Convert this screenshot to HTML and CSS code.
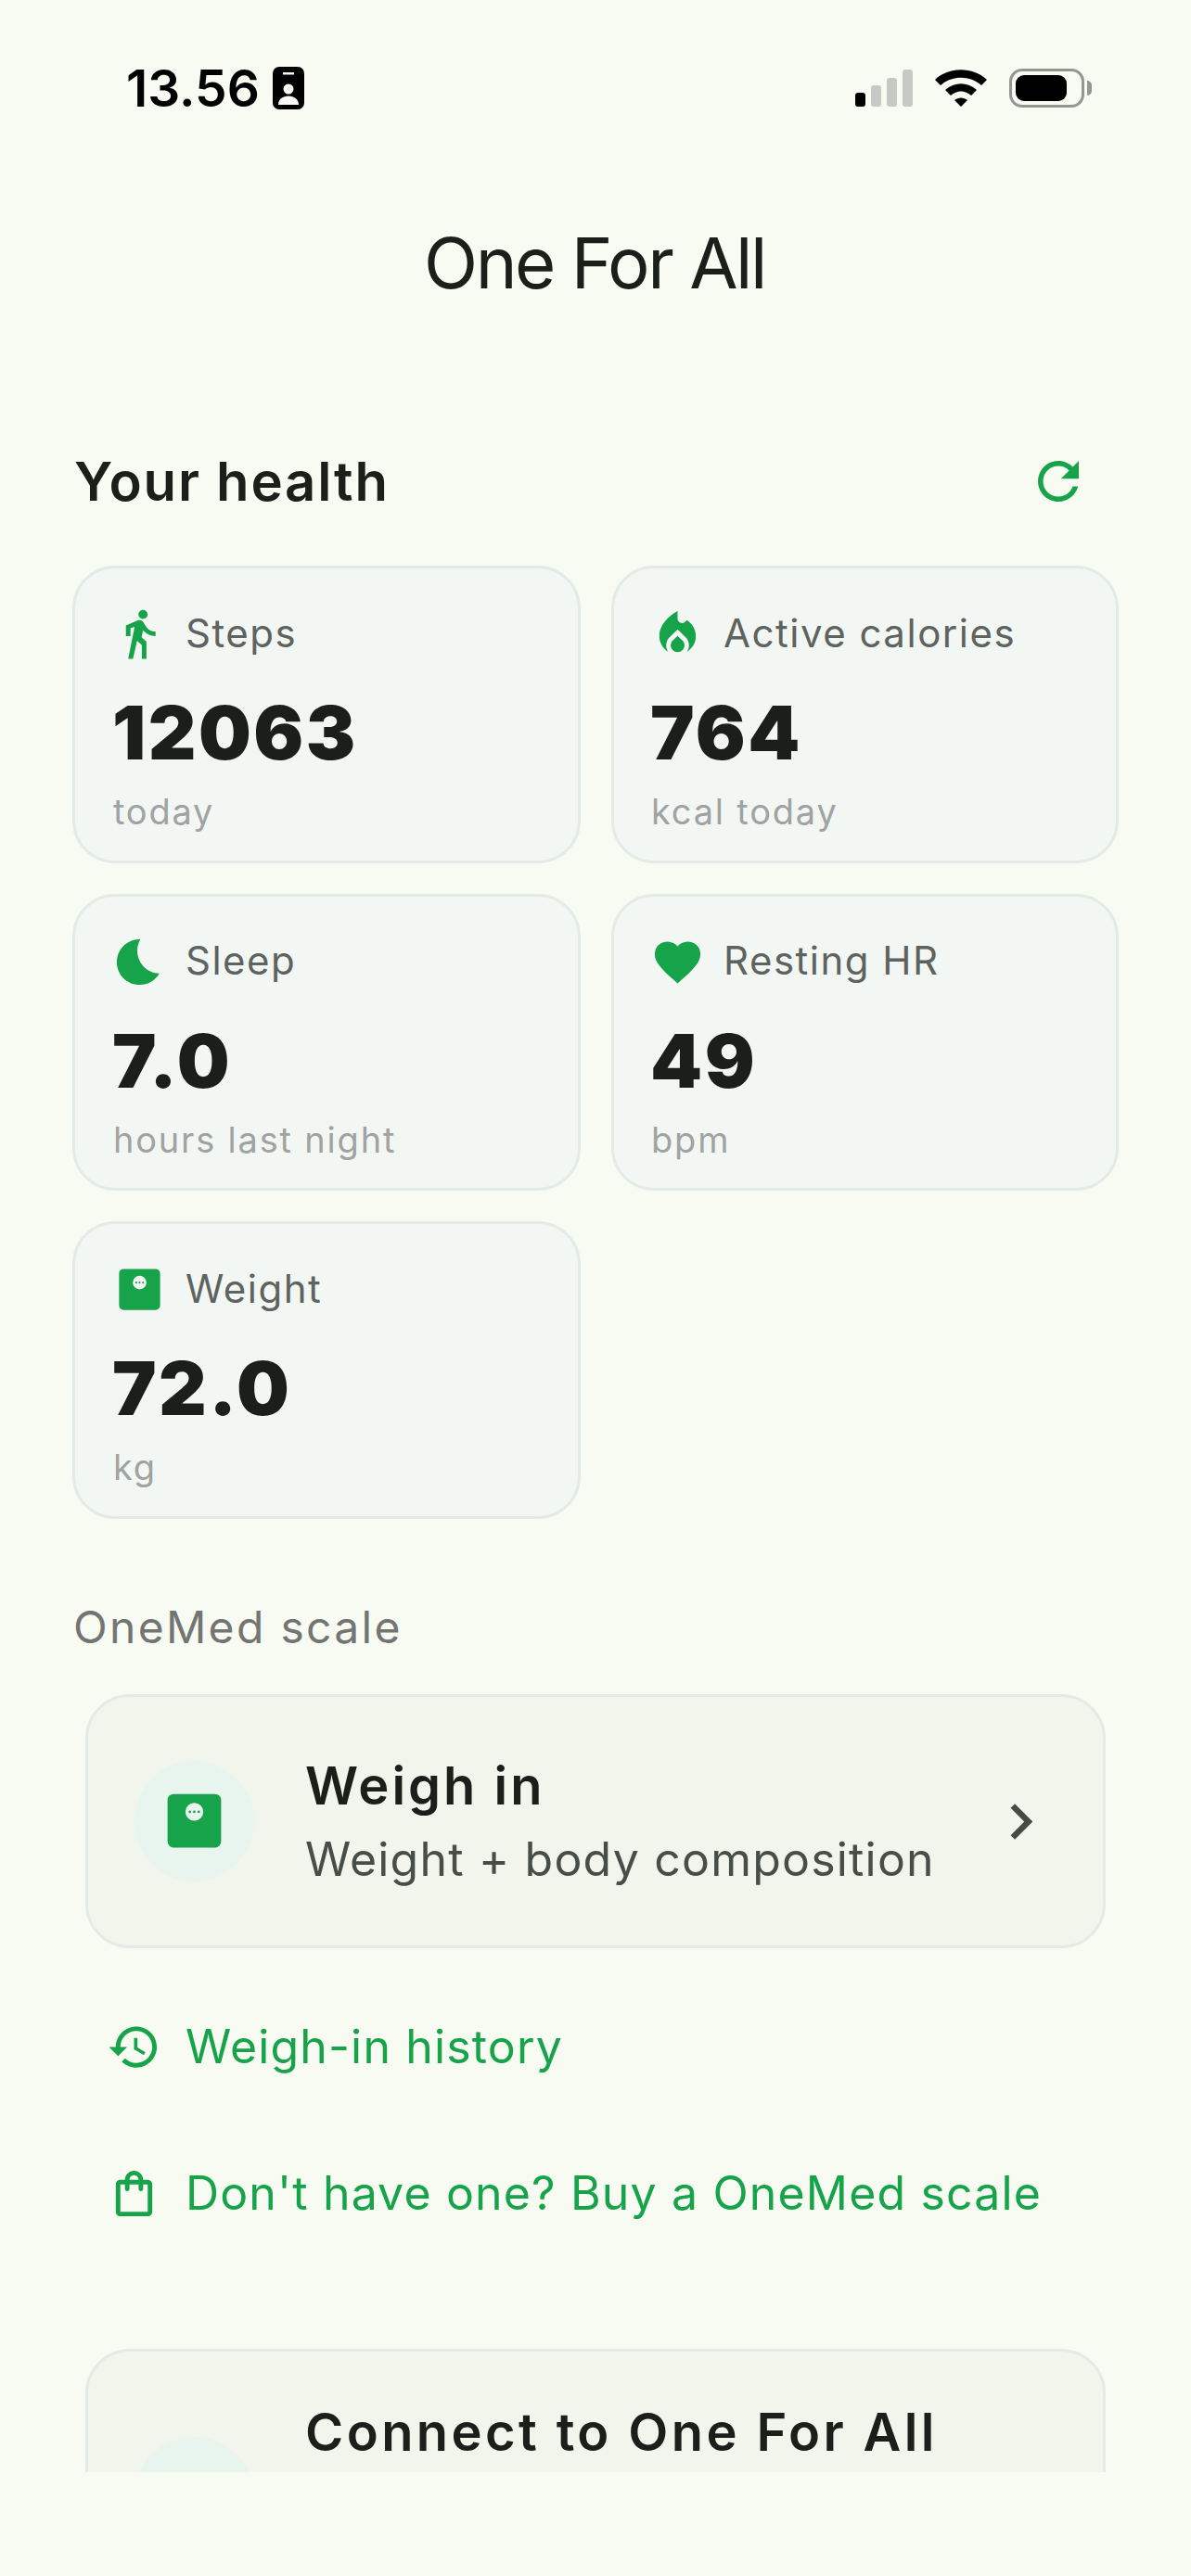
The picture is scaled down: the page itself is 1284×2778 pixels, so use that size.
FILE: index.html
```html
<!DOCTYPE html>
<html lang="en">

<head>
    <meta charset="UTF-8">
    <meta name="viewport" content="width=device-width, initial-scale=1.0">
    <title>One For All</title>
    <link rel="stylesheet" href="styles.css">
</head>

<body>
    <div class="screen">
        <div class="status-bar">
            <div class="status-left">
                <span class="time">13.56</span>
                <svg class="badge" width="34" height="46" viewBox="0 0 34 46">
                    <path fill="#000" fill-rule="evenodd" d="M7 0H27A7 7 0 0 1 34 7V39A7 7 0 0 1 27 46H7A7 7 0 0 1 0 39V7A7 7 0 0 1 7 0ZM11 6V8.500H23V6ZM17 18.500A5.500 5.500 0 1 0 17 29.500A5.500 5.500 0 1 0 17 18.500ZM6 41C6 35 11 31.500 17 31.500C23 31.500 28 35 28 41Z" />
                </svg>
            </div>
            <div class="status-right">
                <div class="signal">
                    <span class="bar bar-1 on"></span>
                    <span class="bar bar-2"></span>
                    <span class="bar bar-3"></span>
                    <span class="bar bar-4"></span>
                </div>
                <svg class="wifi" width="56" height="40" viewBox="0 0 56 40">
                    <path d="M0 11C15 -3.500 41 -3.500 56 11L50 17C38 6 18 6 6 17Z" />
                    <path d="M11 22C21 13 35 13 45 22L39 28C32 22 24 22 17 28Z" />
                    <path d="M21 33C25 29.500 31 29.500 35 33L28 40Z" />
                </svg>
                <div class="battery">
                    <div class="battery-body"><div class="battery-fill"></div></div>
                    <div class="battery-tip"></div>
                </div>
            </div>
        </div>

        <h1 class="app-title">One For All</h1>

        <div class="content">
            <div class="section-head">
                <h2>Your health</h2>
                <svg class="refresh" viewBox="0 0 24 24">
                    <path d="M17.650 6.350C16.200 4.900 14.210 4 12 4c-4.420 0-7.990 3.580-7.990 8s3.570 8 7.990 8c3.730 0 6.840-2.550 7.730-6h-2.080c-.82 2.330-3.040 4-5.650 4-3.310 0-6-2.690-6-6s2.690-6 6-6c1.660 0 3.140.69 4.220 1.780L13 11h7V4l-2.350 2.350z" />
                </svg>
            </div>

            <div class="stats">
                <div class="stat-card">
                    <div class="stat-head">
                        <svg class="stat-icon" viewBox="0 0 24 24"><path d="M13.500 5.500c1.100 0 2-.9 2-2s-.9-2-2-2-2 .9-2 2 .9 2 2 2zM9.800 8.900L7 23h2.100l1.800-8 2.100 2v6h2v-7.500l-2.100-2 .6-3C14.800 12 16.800 13 19 13v-2c-1.900 0-3.500-1-4.300-2.400l-1-1.600c-.4-.6-1-1-1.700-1-.3 0-.5.1-.8.1L6 8.300V13h2V9.600l1.800-.7" /></svg>
                        <span class="stat-label">Steps</span>
                    </div>
                    <div class="stat-value">12063</div>
                    <div class="stat-unit">today</div>
                </div>
                <div class="stat-card">
                    <div class="stat-head">
                        <svg class="stat-icon" viewBox="0 0 24 24"><path d="M12 12.900l-2.130 2.090C9.310 15.550 9 16.280 9 17.060 9 18.680 10.350 20 12 20s3-1.320 3-2.940c0-.78-.31-1.520-.87-2.070L12 12.900z" /><path d="M16 6l-.44.55C14.380 8.020 12 7.190 12 5.300V2S4 6 4 13c0 2.920 1.560 5.470 3.890 6.860C7.330 19.070 7 18.100 7 17.060c0-1.320.52-2.560 1.470-3.500L12 10.100l3.530 3.470c.95.93 1.470 2.170 1.470 3.500 0 1.020-.31 1.960-.85 2.750 1.890-1.150 3.290-3.060 3.710-5.300C20.520 10.970 18.790 7.620 16 6z" /></svg>
                        <span class="stat-label">Active calories</span>
                    </div>
                    <div class="stat-value">764</div>
                    <div class="stat-unit">kcal today</div>
                </div>
                <div class="stat-card">
                    <div class="stat-head">
                        <svg class="stat-icon" viewBox="0 0 24 24"><path d="M12.340 2.020C6.590 1.820 2 6.420 2 12c0 5.520 4.480 10 10 10 3.710 0 6.930-2.020 8.660-5.020-7.510-.25-12.090-8.430-8.320-14.960z" /></svg>
                        <span class="stat-label">Sleep</span>
                    </div>
                    <div class="stat-value">7.0</div>
                    <div class="stat-unit">hours last night</div>
                </div>
                <div class="stat-card">
                    <div class="stat-head">
                        <svg class="stat-icon" viewBox="0 0 24 24"><path d="M12 21.350l-1.450-1.320C5.400 15.360 2 12.280 2 8.500 2 5.420 4.420 3 7.500 3c1.740 0 3.410.81 4.500 2.090C13.090 3.810 14.760 3 16.500 3 19.580 3 22 5.420 22 8.500c0 3.780-3.400 6.860-8.550 11.540L12 21.350z" /></svg>
                        <span class="stat-label">Resting HR</span>
                    </div>
                    <div class="stat-value">49</div>
                    <div class="stat-unit">bpm</div>
                </div>
                <div class="stat-card">
                    <div class="stat-head">
                        <svg class="stat-icon" viewBox="0 0 24 24"><path fill-rule="evenodd" d="M5 3H19A2 2 0 0 1 21 5V19A2 2 0 0 1 19 21H5A2 2 0 0 1 3 19V5A2 2 0 0 1 5 3ZM12 6A3 3 0 1 0 12 12A3 3 0 1 0 12 6Z" /><circle cx="10.500" cy="9" r=".42" /><circle cx="12" cy="9" r=".42" /><circle cx="13.500" cy="9" r=".42" /></svg>
                        <span class="stat-label">Weight</span>
                    </div>
                    <div class="stat-value">72.0</div>
                    <div class="stat-unit">kg</div>
                </div>
            </div>

            <div class="group-label">OneMed scale</div>

            <div class="action-card">
                <div class="action-icon">
                    <svg viewBox="0 0 24 24"><path fill-rule="evenodd" d="M5 3H19A2 2 0 0 1 21 5V19A2 2 0 0 1 19 21H5A2 2 0 0 1 3 19V5A2 2 0 0 1 5 3ZM12 6A3 3 0 1 0 12 12A3 3 0 1 0 12 6Z" /><circle cx="10.500" cy="9" r=".42" /><circle cx="12" cy="9" r=".42" /><circle cx="13.500" cy="9" r=".42" /></svg>
                </div>
                <div class="action-text">
                    <div class="action-title">Weigh in</div>
                    <div class="action-sub">Weight + body composition</div>
                </div>
                <svg class="chevron" viewBox="0 0 24 24"><path d="M10 6 8.590 7.410 13.170 12l-4.580 4.590L10 18l6-6z" /></svg>
            </div>

            <a class="link-row link-history" href="#">
                <svg viewBox="0 0 24 24"><path d="M13 3c-4.970 0-9 4.030-9 9H1l3.890 3.890.07.14L9 12H6c0-3.870 3.130-7 7-7s7 3.130 7 7-3.130 7-7 7c-1.930 0-3.680-.79-4.940-2.060l-1.420 1.420C8.270 19.990 10.510 21 13 21c4.970 0 9-4.030 9-9s-4.030-9-9-9zm-1 5v5l4.280 2.540.72-1.210-3.500-2.080V8H12z" /></svg>
                <span>Weigh-in history</span>
            </a>
            <a class="link-row link-buy" href="#">
                <svg viewBox="0 0 24 24"><path d="M18 6h-2c0-2.210-1.790-4-4-4S8 3.790 8 6H6c-1.100 0-2 .9-2 2v12c0 1.100.9 2 2 2h12c1.100 0 2-.9 2-2V8c0-1.100-.9-2-2-2zm-6-2c1.100 0 2 .9 2 2h-4c0-1.100.9-2 2-2zm6 16H6V8h2v2c0 .55.45 1 1 1s1-.45 1-1V8h4v2c0 .55.45 1 1 1s1-.45 1-1V8h2v12z" /></svg>
                <span>Don't have one? Buy a OneMed scale</span>
            </a>

            <div class="action-card connect-card">
                <div class="action-icon"></div>
                <div class="action-text">
                    <div class="action-title">Connect to One For All</div>
                </div>
            </div>
        </div>
    </div>
</body>

</html>
```

FILE: styles.css
```css
body {
    margin: 0;
    background-color: #f8fbf2;
    font-family: "Inter", "Liberation Sans", sans-serif;
    color: #1a1f1a;
}

.screen {
    width: 1284px;
    height: 2778px;
    overflow: hidden;
}

/* status bar */
.status-bar {
    display: flex;
    justify-content: space-between;
    align-items: flex-start;
    height: 226px;
    padding: 72px 107px 0 136px;
    box-sizing: border-box;
}

.status-left {
    display: flex;
    align-items: center;
    gap: 14px;
}

.time {
    font-size: 55px;
    font-weight: 600;
    line-height: 46px;
    color: #000;
}

.status-right {
    display: flex;
    align-items: center;
    margin-top: 2px;
}

.signal {
    display: flex;
    align-items: flex-end;
    gap: 6px;
    height: 40px;
    margin-right: 24px;
}

.bar {
    width: 11px;
    border-radius: 3px;
    background-color: #c6c9c4;
}

.bar.on {
    background-color: #000;
}

.bar-1 {
    height: 15px;
}

.bar-2 {
    height: 23px;
}

.bar-3 {
    height: 31px;
}

.bar-4 {
    height: 40px;
}

.wifi {
    margin-right: 24px;
}

.battery {
    display: flex;
    align-items: center;
    gap: 3px;
}

.battery-body {
    width: 81px;
    height: 42px;
    box-sizing: border-box;
    padding: 4px;
    border: 3px solid #949791;
    border-radius: 14px;
}

.battery-fill {
    width: 55px;
    height: 28px;
    background-color: #000;
    border-radius: 9px;
}

.battery-tip {
    width: 5px;
    height: 16px;
    background-color: #949791;
    border-radius: 0 8px 8px 0;
}

.app-title {
    margin: 2px 0 -2px;
    padding-right: 2px;
    height: 110px;
    font-size: 76px;
    font-weight: 400;
    line-height: 110px;
    letter-spacing: -2.500px;
    text-align: center;
}

/* scrolling part, cut off above the bottom of the screen */
.content {
    height: 2330px;
    overflow: hidden;
}

.section-head {
    display: flex;
    justify-content: space-between;
    align-items: center;
    height: 66px;
    margin-top: 150px;
    padding: 0 110px 0 80px;
}

.section-head h2 {
    margin: 0;
    font-size: 58px;
    font-weight: 600;
    letter-spacing: 1.800px;
}

.refresh {
    width: 66px;
    height: 66px;
    fill: #16a34a;
}

.stats {
    display: grid;
    grid-template-columns: 548px 547px;
    grid-auto-rows: 320.500px;
    gap: 33px;
    margin: 58px 0 0 78px;
}

.stat-card {
    box-sizing: border-box;
    padding: 41px 40px 0;
    background-color: #f3f7f3;
    border: 3px solid #e3ebe6;
    border-radius: 46px;
}

.stat-card:nth-child(even) {
    padding-left: 39px;
}

.stat-head {
    display: flex;
    align-items: center;
    gap: 20px;
    height: 59px;
}

.stat-icon {
    width: 59px;
    height: 59px;
    flex-shrink: 0;
    fill: #16a34a;
}

.stat-label {
    margin-top: -3px;
    font-size: 42px;
    letter-spacing: 1.500px;
    color: #5f6360;
}

.stat-value {
    margin: 28px 0 0;
    font-size: 80px;
    font-weight: 900;
    line-height: 97px;
    letter-spacing: 2.500px;
}

.stat-unit {
    margin: 14px 0 0 1px;
    font-size: 38px;
    line-height: 46px;
    letter-spacing: 1.800px;
    color: #a0a3a1;
}

.group-label {
    margin: 88px 0 0 79px;
    font-size: 48px;
    line-height: 58px;
    letter-spacing: 2.300px;
    color: #737573;
}

.action-card {
    display: flex;
    align-items: center;
    box-sizing: border-box;
    width: 1100px;
    height: 274px;
    margin: 43px 0 0 92px;
    padding: 0 50px 0 49px;
    background-color: #f2f5ec;
    border: 3px solid #e3ebe6;
    border-radius: 48px;
}

.action-icon {
    display: flex;
    justify-content: center;
    align-items: center;
    width: 130px;
    height: 130px;
    flex-shrink: 0;
    border-radius: 50%;
    background-color: #e8f5ee;
}

.action-icon svg {
    width: 77px;
    height: 77px;
    fill: #16a34a;
}

.action-text {
    flex: 1;
    margin-left: 55px;
}

.action-title {
    font-size: 56px;
    font-weight: 600;
    line-height: 68px;
    letter-spacing: 3px;
}

.action-sub {
    margin-top: 15px;
    font-size: 50px;
    line-height: 60px;
    letter-spacing: 1.200px;
    color: #474d47;
}

.chevron {
    width: 77px;
    height: 77px;
    margin-top: 2px;
    flex-shrink: 0;
    fill: #444a44;
}

.link-row {
    display: flex;
    align-items: center;
    gap: 26px;
    margin-left: 115px;
    height: 59px;
    font-size: 50px;
    letter-spacing: 1.150px;
    color: #16a34a;
    text-decoration: none;
}

.link-row svg {
    width: 59px;
    height: 59px;
    flex-shrink: 0;
    fill: #16a34a;
}

.link-history {
    margin-top: 77px;
}

.link-buy {
    margin-top: 99px;
}

.connect-card {
    align-items: flex-start;
    margin-top: 138px;
    height: 300px;
    padding-top: 53px;
}

.connect-card .action-title {
    letter-spacing: 3.400px;
}

.connect-card .action-icon {
    margin-top: 39px;
}
```
